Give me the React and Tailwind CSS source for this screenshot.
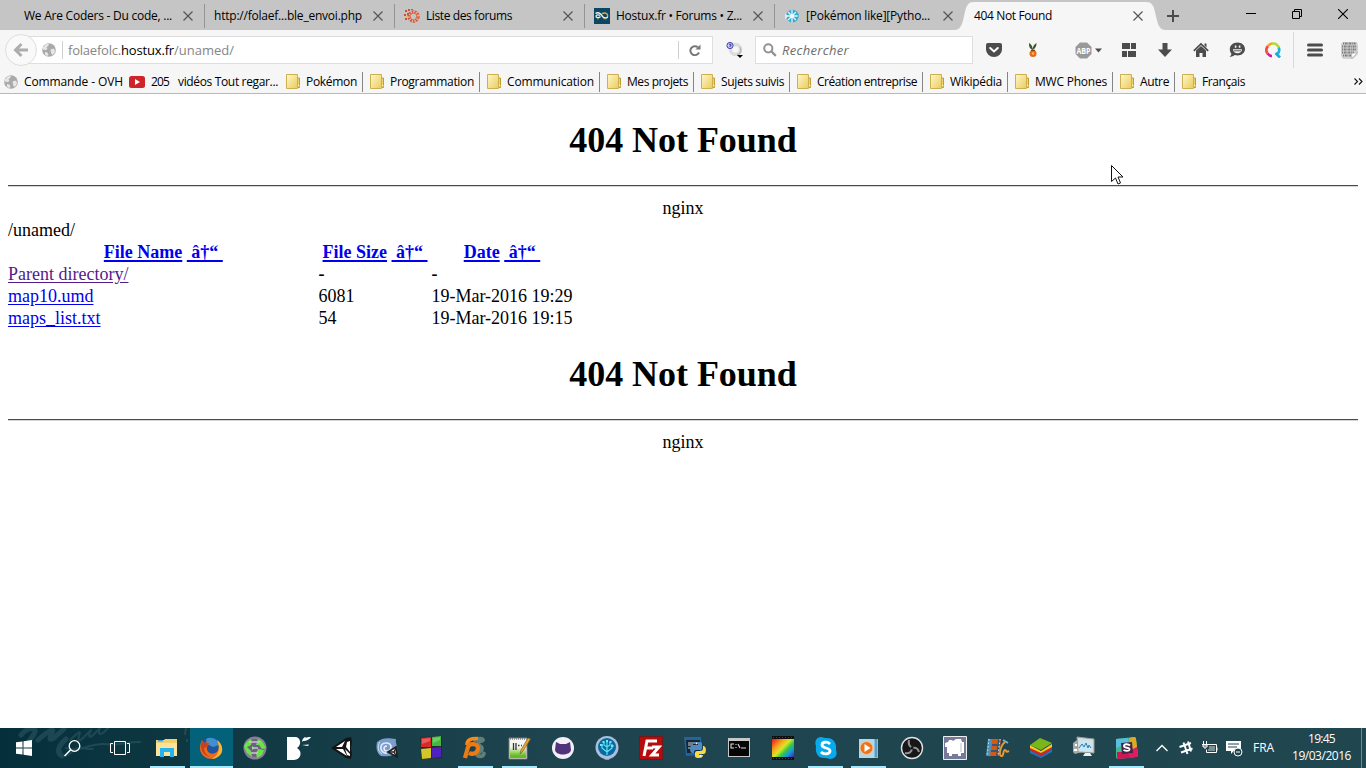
import React, { useLayoutEffect, useRef, useState } from "react";

/* Text spread over a given width by adjusting its letter spacing. */
function Fit({ w, className = "", children }) {
  const ref = useRef(null);
  const [spacing, setSpacing] = useState(0);
  useLayoutEffect(() => {
    const el = ref.current;
    setSpacing((w - el.getBoundingClientRect().width) / el.textContent.length);
  }, [w]);
  return (
    <span ref={ref} style={{ letterSpacing: spacing + "px" }} className={"inline-block shrink-0 whitespace-pre " + className}>
      {children}
    </span>
  );
}

function Svg({ s = 16, vb, className = "", children }) {
  return (
    <svg width={s} height={s} viewBox={vb || `0 0 ${s} ${s}`} fill="none" className={"block shrink-0 " + className}>
      {children}
    </svg>
  );
}

const Close = () => (
  <Svg s={10}><path d="M.5.5l9 9M9.5.5l-9 9" stroke="#555" strokeWidth="1.2" /></Svg>
);

const Globe = ({ s = 14 }) => (
  <Svg s={s} vb="0 0 14 14">
    <circle cx="7" cy="7" r="6.8" fill="#a9a9a9" />
    <path d="M1 4.5L3.8 1.2 7 .7 6.2 3 4.5 4.3 5.4 6 3.8 7.2 2 6.5 1 7zM8.500 6.500l3-1 1.500 1.700-.6 3.200L10 12l-1-2.3zM3 9l2.4.6L6.600 12 5 13 3 11.600z" fill="#e6e6e6" />
  </Svg>
);

const Folder = () => (
  <Svg s={15}>
    <path d="M11 4h2.5v9.5H11z" fill="#ecd36c" stroke="#bd9f34" strokeWidth="1" />
    <path d="M.5.5h11v14H.5z" fill="url(#folderFill)" stroke="#cdb052" />
    <path d="M12 11.5h1.5" stroke="#fff2b3" />
    <defs>
      <linearGradient id="folderFill" x1="0" y1="0" x2="1" y2="1">
        <stop offset="0" stopColor="#fff6c5" /><stop offset="1" stopColor="#e9cd60" />
      </linearGradient>
    </defs>
  </Svg>
);

const ForumIcon = () => (
  <Svg s={16}>
    <circle cx="9.500" cy="8.500" r="4.500" stroke="#d8563a" strokeWidth="3.400" strokeDasharray="2 .7" />
    <circle cx="9.500" cy="8.500" r="4.600" stroke="#f7bd98" strokeWidth="1.300" strokeDasharray="1 1.600" />
    <path d="M1 2h2v2H1zM4 1h2v2H4zM0 6h2v2H0zM3 5h2v2H3zM1 10h2v2H1zM7 1h2v1H7z" fill="#c9503a" />
    <path d="M3 3h1v1H3zM2 8h2v1H2zM5 3h2v1H5z" fill="#f0b35e" />
  </Svg>
);
const HostuxIcon = () => (
  <Svg s={16}>
    <path d="M0 0h16v16H0z" fill="#0b4763" />
    <path d="M1.500 5.500C3 4.300 5.500 4.500 7 6.500L9 9c1.500 1.500 4.500 1.300 4.700-.8" stroke="#f1f1ed" strokeWidth="1.400" />
    <path d="M6.500 8.500C5 10.300 2 10 2 8.300c0-1.500 2.500-2 4-.8" stroke="#f1f1ed" strokeWidth="1.300" />
    <path d="M8 6c1.500-1.700 5.500-1.500 5.800 2" stroke="#e3a844" strokeWidth="1.400" />
    <path d="M3 10.800h2M9.500 10.800h3" stroke="#e3a844" strokeWidth=".8" />
  </Svg>
);
const ZesteIcon = () => (
  <Svg s={14} vb="0 0 16 16">
    <circle cx="8.500" cy="8" r="7.200" fill="#35a9d1" />
    <path d="M8 1v14M1.500 8h13M3.500 3.500l9 9M12.500 3.500l-9 9" stroke="#dff5fb" strokeWidth="1.500" />
    <circle cx="8" cy="8" r="2.200" fill="#e8fbff" />
    <path d="M0 5l4 3-4 4z" fill="#d8eef4" />
  </Svg>
);

function Tab({ icon, title, w, className = "w-[190px]" }) {
  return (
    <div className={"flex h-[30px] shrink-0 items-center justify-between border-r border-[#9b9b9b] pl-[9px] pr-[11px] pt-[2px] [border-image:linear-gradient(to_bottom,transparent_5px,#949494_5px,#949494_27px,transparent_27px)_1] " + className}>
      <div className="flex items-center gap-[6px]">
        {icon && <span className="flex w-4 justify-center">{icon}</span>}
        <Fit w={w}>{title}</Fit>
      </div>
      <Close />
    </div>
  );
}

function TabBar() {
  return (
    <div className="flex h-[30px] bg-[#c5c5c5]">
      <Tab title="We Are Coders - Du code, ..." w={148} className="w-[205px] !pl-6" />
      <Tab title="http://folaef...ble_envoi.php" w={148} />
      <Tab icon={<ForumIcon />} title="Liste des forums" w={86} />
      <Tab icon={<HostuxIcon />} title="Hostux.fr • Forums • Z..." w={126} />
      <div className="flex w-[179px] shrink-0 items-center justify-between pl-[9px] pr-px pt-[2px]">
        <div className="flex items-center gap-[6px]">
          <span className="flex w-4 justify-center"><ZesteIcon /></span>
          <Fit w={124}>[Pokémon like][Pytho...</Fit>
        </div>
        <Close />
      </div>
      <svg width="20" height="30" className="block shrink-0"><path d="M0 30C8 30 8.500 22 10.500 14 12.500 5 14 2 20 2v28z" fill="#f6f6f6" /></svg>
      <div className="mt-[2px] flex h-7 w-[172px] shrink-0 items-center justify-between bg-[#f6f6f6] pr-[3px]">
        <Fit w={78}>404 Not Found</Fit>
        <Close />
      </div>
      <svg width="20" height="30" className="block shrink-0"><path d="M20 30C12 30 11.500 22 9.500 14 7.500 5 6 2 0 2v28z" fill="#f6f6f6" /></svg>
      <Svg s={12} className="ml-px mt-[10px]"><path d="M6 0v12M0 6h12" stroke="#4c4c4c" strokeWidth="2" /></Svg>
      <div className="ml-[67px] mt-[9px] flex gap-9">
        <Svg s={10}><path d="M0 4.500h10" stroke="#000" /></Svg>
        <Svg s={10}><path d="M.5 2.500h7v7h-7zM2.500 2V.5h7v7H8" stroke="#000" /></Svg>
        <Svg s={10}><path d="M0 0l10 10M10 0L0 10" stroke="#000" strokeWidth="1.100" /></Svg>
      </div>
    </div>
  );
}

const DARK = "#4c4c4c";

function Toolbar() {
  return (
    <div className="flex h-10 items-center">
      <div className="z-10 ml-[5px] flex size-8 shrink-0 items-center justify-center rounded-full border border-[#dedede] bg-[#f9f9f9]">
        <Svg s={16}><path d="M8.500 2L2.500 8l6 6M3 8h12" stroke="#adadad" strokeWidth="3" /></Svg>
      </div>
      <div className="-ml-[9px] flex h-7 w-[685px] shrink-0 items-center border border-[#dedede] bg-white pl-[13px]">
        <Globe />
        <div className="ml-[6px] mr-[5px] h-[18px] w-px bg-[#cfcfcf]" />
        <div className="flex text-[13px] text-[#858585]">
          <Fit w={53}>folaefolc.</Fit><Fit w={53} className="text-black">hostux.fr</Fit><Fit w={60}>/unamed/</Fit>
        </div>
        <div className="ml-auto h-[18px] w-px bg-[#cfcfcf]" />
        <Svg s={12} className="ml-[10px] mr-[11px]">
          <path d="M10 8.500a4.500 4.500 0 1 1-1.200-5.300" stroke="#777" strokeWidth="2" />
          <path d="M11.500.5v5H6.500z" fill="#777" />
        </Svg>
      </div>
      <Svg s={18} className="ml-[13px]">
        <circle cx="9.500" cy="8.500" r="5" stroke="#dcdcdc" strokeWidth="3.500" />
        <path d="M14 6c2 3 1 7-3 8" stroke="#b6b6b6" strokeWidth="1.300" />
        <circle cx="4" cy="4.500" r="3.100" fill="#c9c9ff" stroke="#4144a5" />
        <path d="M3 3.300h2v1.500H4v1.200" stroke="#3133a0" strokeWidth=".9" />
        <path d="M11 14h6l-3 3z" fill="#000" />
      </Svg>
      <div className="ml-[11px] flex h-7 w-[218px] shrink-0 items-center border border-[#dedede] bg-white pl-[7px] text-[13px] italic text-[#6d6d6d]">
        <Svg s={14} className="mr-[5px]">
          <circle cx="5.300" cy="5.300" r="4.100" stroke="#929292" strokeWidth="2" /><path d="M8.500 8.500l4.300 4.300" stroke="#929292" strokeWidth="2.400" />
        </Svg>
        <Fit w={67}>Rechercher</Fit>
      </div>
      <Svg s={16} className="ml-[13px]">
        <path d="M2 1h12a2 2 0 0 1 2 2v4.500a8 7.500 0 0 1-16 0V3a2 2 0 0 1 2-2z" fill={DARK} />
        <path d="M4.200 6L8 9.500 11.800 6" stroke="#fff" strokeWidth="2" strokeLinecap="round" />
      </Svg>
      <Svg s={16} className="ml-[23px]">
        <path d="M7.500 8C4 6 4 4 4 1c2 1 3.500 3 3.700 6 .2-3 1.800-5 3.800-6 0 3-1 5.500-4 7z" fill="#385b26" />
        <circle cx="8" cy="11.500" r="3.500" fill="#e66b14" /><circle cx="8" cy="11.500" r="1.200" fill="#ffb45f" />
        <path d="M6 8.300h4" stroke="#742d0c" />
      </Svg>
      <Svg s={17} className="ml-[34px]">
        <path d="M5 .5h7L16.500 5v7L12 16.500H5L.5 12V5z" fill="#999" />
        <text x="8.500" y="11.500" textAnchor="middle" textLength="14" lengthAdjust="spacingAndGlyphs" className="fill-white font-['Open_Sans',sans-serif] text-[8.5px] font-bold">ABP</text>
      </Svg>
      <Svg s={7} className="ml-[3px]"><path d="M0 1.500h7L3.500 5.500z" fill={DARK} /></Svg>
      <Svg s={14} className="ml-5"><path d="M0 0h8v6H0zM9 0h5v6H9zM0 8h5v6H0zM6 8h8v6H6z" fill={DARK} /></Svg>
      <Svg s={14} className="ml-[22px]"><path d="M4.500 0h5v6.500H14L7 14 0 6.500h4.500z" fill={DARK} /></Svg>
      <Svg s={16} className="ml-[21px]"><path d="M3 8.500L8 4l5 4.500V15H9.500v-4h-3v4H3zM11.500 1.500h2v4l-2-2z" fill={DARK} /><path d="M.8 8.800L8 2l7.200 6.800" stroke={DARK} strokeWidth="1.700" /></Svg>
      <Svg s={16} className="ml-5">
        <path d="M8.500.5c4.300 0 7.500 2.900 7.500 6.500s-3.200 6.500-7.500 6.500c-1 0-1.900-.1-2.700-.4C4.500 14.200 2.800 15 .3 15c1.200-.8 2-1.900 2.100-3.300C1.300 10.500.8 8.900.8 7 .8 3.400 4.200.5 8.500.5z" fill={DARK} />
        <path d="M4 7.300h9c0 5.200-9 5.200-9 0z" fill="#f6f6f6" /><path d="M5 8.800h7" stroke={DARK} strokeWidth=".9" /><path d="M5.800 3.500h1.600v2.200H5.800zM9.800 3.500h1.600v2.200H9.800z" fill="#f6f6f6" />
      </Svg>
      <Svg s={16} className="ml-5">
        <path d="M2.500 11.500A6.200 6.200 0 0 1 3 4" stroke="#f2503c" strokeWidth="2.700" />
        <path d="M3 4a6.200 6.200 0 0 1 4-2.500" stroke="#fba120" strokeWidth="2.700" />
        <path d="M7 1.600c3-.5 5.500 1 6.800 3.800" stroke="#b8d82c" strokeWidth="2.700" />
        <path d="M13.700 5.400c1 2.500.4 5.200-1.700 7" stroke="#1fb4da" strokeWidth="2.700" />
        <path d="M2.500 11.500C3.700 13 5.200 14 7 14" stroke="#d9189a" strokeWidth="2.700" />
        <path d="M10.500 11l4.500 4.500" stroke="#21a7e0" strokeWidth="2.700" />
      </Svg>
      <div className="ml-3 h-9 w-px shrink-0 bg-[#dadada]" />
      <Svg s={16} className="ml-[13px]"><path d="M1.500 3h13M1.500 8h13M1.500 13h13" stroke={DARK} strokeWidth="3" strokeLinecap="round" /></Svg>
      <Svg s={17} className="ml-[18px]">
        <path d="M2 0h14l1 3v9l-5 5H2l-2-3V2z" fill="#d2d2d2" />
        <path d="M2 1.500h13M1 4.500h15M1 7.500h15M1 10.500h12M2 13.500h8" stroke="#7b7b7b" strokeWidth="2.200" strokeDasharray="1 .8 2 .6" />
        <path d="M16.500 10.500L11 16.500l-.500-5z" fill="#fff" stroke="#aaa" strokeWidth=".7" />
      </Svg>
    </div>
  );
}

const FOLDERS = [
  ["Pokémon", 51], ["Programmation", 84], ["Communication", 87], ["Mes projets", 61], ["Sujets suivis", 63],
  ["Création entreprise", 100], ["Wikipédia", 52], ["MWC Phones", 72], ["Autre", 29], ["Français", 43],
];
function Bookmarks() {
  return (
    <div className="flex h-6 items-center border-b border-[#b9b9b9] pl-1">
      <Globe />
      <Fit w={99} className="ml-[6px]">Commande - OVH</Fit>
      <Svg s={16} className="ml-[6px]">
        <rect x="0" y="2" width="16" height="12" rx="2.500" fill="#cf2429" /><path d="M6 5l5 3-5 3z" fill="#fff" />
      </Svg>
      <Fit w={18} className="ml-[6px]">205</Fit>
      <Fit w={100} className="ml-[9px] mr-[1px]">vidéos Tout regar...</Fit>
      {FOLDERS.map(([name, w], i) => (
        <div key={name} className={"flex h-5 shrink-0 items-center pl-[7px] pr-[5px] " + (i < 9 ? "border-r border-[#858585]" : "")}>
          <Folder />
          <Fit w={w} className="ml-[5px]">{name}</Fit>
        </div>
      ))}
      <Svg s={9} className="ml-auto mr-[3px]"><path d="M.5 1.500l3 3-3 3M5 1.500l3 3-3 3" stroke="#111" strokeWidth="1.100" /></Svg>
    </div>
  );
}

const NotFound = () => (
  <div className="text-center">
    <h1 className="mb-6 text-[36px] font-bold leading-[42px]"><Fit w={227.5}>404 Not Found</Fit></h1>
    <div className="mb-[10px] h-[2px] border-b border-t border-b-[#d4d4d4] border-t-[#4b4b4b]" />
    <div>nginx</div>
  </div>
);

const Sortable = ({ children }) => (
  <div className="flex justify-center gap-[4.5px] font-bold text-[#0000ee]">
    <span className="underline decoration-2 underline-offset-2">{children}</span>
    <span className="whitespace-pre underline decoration-2 underline-offset-2">{"\u00a0â†“\u00a0"}</span>
  </div>
);
const LINK = "text-[#0000ee] underline underline-offset-2";

function Listing() {
  return (
    <div className="grid grid-cols-[310.6px_112.9px_141px] whitespace-nowrap">
      <Sortable>File Name</Sortable><Sortable>File Size</Sortable><Sortable>Date</Sortable>
      <div><span className="text-[#551a8b] underline underline-offset-2">Parent directory/</span></div><b>-</b><b>-</b>
      <div><span className={LINK}>map10.umd</span></div><div>6081</div><div>19-Mar-2016 19:29</div>
      <div><span className={LINK}>maps_list.txt</span></div><div>54</div><div>19-Mar-2016 19:15</div>
    </div>
  );
}

/* Taskbar drawings, on a 24 unit canvas. */
const APPS = [
  { run: true, art: <>
    <path d="M1 4h8l1-1h12v17H1z" fill="#f2cf6b" /><path d="M1 7h21v13H1z" fill="#fbe39b" /><path d="M3 4h5v1.500H3z" fill="#38a3d9" />
    <path d="M5 21v-9h14v9h-4v-5H9v5z" fill="#25b3ee" /></> },
  { run: true, active: true, art: <>
    <circle cx="12" cy="12" r="10.500" fill="#23539c" /><path d="M7 3c5-3 12 0 13 6l-6 2-6-3z" fill="#3f8fd3" />
    <path d="M18 4c6 4 7 12 2 16-7 6-18 2-19-7 0-4 1-7 2-9l2 3c2-1 4-1 6 0-2 1-2 3-3 4-1 5 4 8 8 6 5-2 5-8 2-13z" fill="#ec6a1c" />
    <path d="M18 4c6 4 7 12 2 16-2 2-5 3-8 3 7-3 10-10 6-19z" fill="#f8b52e" /><path d="M3 4l2 3 5 0-2 4-3 1c0 4 2 7 6 9-7-1-11-8-8-17z" fill="#cc3f1d" /></> },
  { art: <>
    <circle cx="12" cy="12" r="11.500" fill="#897d98" /><circle cx="12" cy="12" r="9" fill="#6f5f80" />
    <path d="M2 8l5-5 2 2-1 4-4 2 4 4 1 6-5-4-3-6zM15 3l4 2 4 7-4 1-3-4-3 0zM15 13l6 1-2 5-5 3-1-5zM9 10l3 2-3 2z" fill="#6ae34b" /><path d="M8 17h7M6 6h11M9 12h6" stroke="#ccc2d3" strokeWidth="1.500" /></> },
  { art: <>
    <path d="M0 1h8c6 0 7 8 2 11 6 3 4 12-3 12H0z" fill="#fff" /><path d="M15 6c0-3 2-5 4-5-1 2-2 3-4 5zM16 5c2-4 5-4 8-4-1 2-4 4-8 4zM15 9l7-.5-1 1.500z" fill="#fff" /></> },
  { art: <>
    <path d="M0 12L15 2l5-1 1 5-1 6 1 6-1 5-5-1z" fill="#141414" /><path d="M5 11l9-6-3 6zM16 6l3-1v11l-4-5zM5 13h7l4 7z" fill="#fff" /><path d="M14 13l5 5v2l-3-1z" fill="#fff" /></> },
  { art: <>
    <path d="M2 6c6-5 11-4 19-3-1 4 2 7 1 12-4 5-8 6-16 5C1 17 1 10 2 6z" fill="#7a9dcc" /><path d="M12 17c-7 1-9-10-1-10 7 0 6 8 1 8-4 0-4-5 0-5" stroke="#e1edfa" strokeWidth="1.700" /><path d="M7 18c-4-2-5-8-2-12" stroke="#d0e2f5" />
    <path d="M13 16l8-5 1 10z" fill="#fff" stroke="#202020" strokeWidth="1.800" /><path d="M14 16h5l2-4M19 16l2 4" stroke="#202020" strokeWidth="1.400" /></> },
  { art: <>
    <path d="M1 1l22-1v22L2 23z" fill="#292b25" /><path d="M2 2l10-1v10H2z" fill="#d8282a" /><path d="M13 1l9-1v10h-9z" fill="#42b83e" /><path d="M2 13l10-1v10l-9 1z" fill="#d3c629" /><path d="M13 12l9-1v10l-9 1z" fill="#5120c0" /><path d="M3 3l8-1v3L3 8zM14 2l7-1v3l-7 3z" fill="#fff" opacity=".25" /></> },
  { run: true, art: <>
    <path d="M12 4.500c3-3 8-2 8-.5s-4 1-5 3M21 17.500c-1 4-7 3.500-7 1 0-2 5-2.500 5-6 0-2-2-3-4-3" stroke="#607f78" strokeWidth="3.800" strokeLinecap="round" />
    <path d="M15 2.500C8 2 4 4 4 9" stroke="#f58a1c" strokeWidth="3.600" />
    <path d="M2 22l3-11c1-4 10-4 10 1 0 5-5 7-9 5" stroke="#ed7b14" strokeWidth="4.200" /></> },
  { run: true, art: <>
    <path d="M2 2h18v21H2z" fill="#f6f6f3" stroke="#777" /><path d="M3 11h16v11H3z" fill="url(#leaf)" /><path d="M3 3h16" stroke="#555" strokeDasharray="1 1" /><path d="M6.500 7v7M9 7v7M11 9.500h1.500M14 9.500h1" stroke="#343831" strokeWidth="1.300" /><path d="M13 18l1-4 7-12 2.500 1-7.500 12z" fill="#e9a82d" stroke="#835d31" strokeWidth=".7" />
    <defs><linearGradient id="leaf" x1="0" y1="0" x2="0" y2="1"><stop stopColor="#f4f8e8" /><stop offset=".8" stopColor="#62bd1c" /></linearGradient></defs></> },
  { art: <>
    <circle cx="12" cy="12" r="11" fill="#f2f0f6" /><path d="M5 6l4 2h6l4-2 1 8c-1 6-15 6-16 0z" fill="#50327d" /></> },
  { art: <>
    <path d="M8 20h8l-2 4h-4z" fill="#7c98b5" /><circle cx="12" cy="11.500" r="11.500" fill="#a9bfdd" /><circle cx="12" cy="11" r="9" fill="#0a6aa0" />
    <path d="M12 19V5M12 16l-5-4V8M12 16l5-4V8M12 11L9 9V6M12 11l3-2V6" stroke="#5de1ed" strokeWidth="1.200" />
    <path d="M11 4h2v2h-2zM7.500 5h2v2h-2zM14.500 5h2v2h-2zM5 8h2.500v2H5zM16 9h2.500v2H16z" fill="#68edea" /></> },
  { art: <>
    <path d="M.5.5h23v23H.5z" fill="#b90b0c" stroke="#79100d" strokeDasharray="2 1" /><path d="M5 20L8 5h10M7 12h7M13 11h7l-7 8h7" stroke="#fff" strokeWidth="3" /></> },
  { art: <>
    <path d="M1 1h17l1 18-16 1z" fill="#2463a1" /><path d="M3 4h14v13H4z" fill="#172530" /><path d="M5 7h7M5 9h5M5 12h6" stroke="#cad7df" />
    <path d="M12 6h5q2 0 2 2v4q0 2-2 2h-4q-2 0-2 3H9q-2-1-2-4t2-4h6V8h-4q0-2 1-2z" fill="#4f8bc2" />
    <path d="M20 10h1q2 1 2 4t-2 4h-5v1h4q0 3-4 3t-4-2v-3q0-2 2-2h4q2 0 2-3z" fill="#ffd83d" /><path d="M13 7.500h1M17 20h1" stroke="#fff" strokeWidth="1.300" /></> },
  { art: <>
    <path d="M1 2h22v19H1z" fill="#c8c8c8" /><path d="M2 5h20v15H2z" fill="#050505" /><path d="M7 8H4v4h3M9 8v1M9 11v1M11 8l2 4M14 12h5" stroke="#ddd" strokeWidth="1.100" /></> },
  { art: <>
    <path d="M1 0h22v24H1z" fill="#101010" /><path d="M1 3h22v18H1z" fill="url(#spectrum)" /><path d="M2 1.500h21M2 22.500h21" stroke="#445" strokeDasharray="1 2" />
    <defs><linearGradient id="spectrum" x1="0" y1=".1" x2="1" y2=".9"><stop stopColor="#eb271b" /><stop offset=".3" stopColor="#f7a81f" /><stop offset=".48" stopColor="#d7e823" /><stop offset=".65" stopColor="#36c648" /><stop offset=".82" stopColor="#119bdb" /><stop offset="1" stopColor="#4930c6" /></linearGradient></defs></> },
  { run: true, art: <>
    <path d="M7 1c2 0 3 1 4 1 9-1 12 6 11 12 2 5-1 9-6 9-1 0-3-1-4-1C4 23 1 17 2 10 0 5 3 1 7 1z" fill="#08aaec" />
    <path d="M16 8C13 5 8 6 8 9c0 4 8 2 8 6 0 3-6 4-9 1" stroke="#fff" strokeWidth="2.800" /></> },
  { run: true, art: <>
    <path d="M4 4l17-1v19H4z" fill="#83c0e0" /><path d="M2 3h15v19H2z" fill="#afd8ed" /><path d="M19 3v18" stroke="#35779d" /><circle cx="9.500" cy="12" r="6.500" fill="#ed741b" stroke="#f7c89d" /><path d="M7.500 8l6 4-6 4z" fill="#fff" /></> },
  { art: <>
    <circle cx="12" cy="12" r="10.500" fill="#171719" stroke="#e0e0e0" strokeWidth="1.400" /><path d="M9 4c-1 4 0 6 3 8M12 12c3-1 6 0 7 4M12 12c0 4-3 6-7 5" stroke="#929296" strokeWidth="2" /><circle cx="12" cy="12" r="1.500" fill="#151517" /></> },
  { art: <>
    <path d="M.5.5h23v23H.5z" fill="#77799a" stroke="#eee" /><path d="M5 6l1-2h3l1 1 3-2h5l1 3h2v11h-3v3h-3v-2H9v2H6v-3H4v-6H2V7z" fill="#fff" /><path d="M18 7v9" stroke="#bbb" /></> },
  { art: <>
    <path d="M3 3h12l-2 17H1z" fill="#d95712" /><path d="M4 3L2 20" stroke="#4b93c0" strokeWidth="4" /><path d="M13 3l-2 17M6 9h6M5 15h6" stroke="#285d7e" strokeWidth="2" /><path d="M3 3L1 20M14 3l-2 17" stroke="#d5e5ea" strokeDasharray="1.500 2" />
    <path d="M19 6c-5 4-7 15-3 14 2-1 1-6 3-6 2 0 0 3 4 1" stroke="#e19a38" strokeWidth="2" /><path d="M17 4l5 3" stroke="#7cb0d0" strokeWidth="2" /></> },
  { art: <>
    <path d="M1 14l11 6 11-7v3l-11 6L1 17z" fill="#2672b4" /><path d="M1 11l11 6 11-7v3l-11 7-11-6z" fill="#d42229" /><path d="M1 9l11 6 11-7v3l-11 6-11-5z" fill="#f4cd15" /><path d="M1 9l10-7 12 5-11 7z" fill="#79b61b" /></> },
  { art: <>
    <path d="M1 7l4-3 2 2 3-1v11l-7 2-2-2z" fill="#a8aaa7" /><path d="M2 14h8M3 9h4" stroke="#fff" strokeWidth="2" /><path d="M5 1l17 2v14L6 16z" fill="#d8ddd9" stroke="#929b9a" /><path d="M7 4l13 1v10H7z" fill="#c8e7f5" /><path d="M7 12l3-4 2 3 2-4 2 5 1-3 2 3" stroke="#2b7eb4" /><path d="M13 17h5l2 3h-9z" fill="#eee" /></> },
  { run: true, art: <>
    <path d="M1 3l18-2q2 0 2 2l2 16q0 2-2 2L3 23q-2 0-2-2z" fill="#3eb890" /><path d="M1 3l12-1 1 5L1 12z" fill="#5bbde0" /><path d="M14 2l5-1q2 0 2 2l1 8-6 3z" fill="#e0a924" /><path d="M2 16l11 0 3 6-13 1q-1 0-1-2z" fill="#cf1754" /><path d="M14 15l8-4 1 8q0 2-2 2l-6 1z" fill="#e71761" /><path d="M6 7l11-1 1 11-11 1z" fill="#472448" /><path d="M15 9.500c-2-2-6-1.500-6 .5 0 2.500 6 1 5.500 3.500-.5 2-4 1.500-6 .5" stroke="#fff" strokeWidth="1.900" /></> },
];

function Taskbar() {
  return (
    <div className="relative flex h-10 shrink-0 overflow-hidden bg-gradient-to-r from-[#05303b] via-[#1e454f] via-40% to-[#20474f] text-white">
      <svg width="200" height="40" fill="none" className="absolute left-0 top-0">
        <g stroke="#86afb8" opacity=".17" strokeLinecap="round" strokeLinejoin="round">
          <path d="M21 7c6-8 18-9 13-1-4 6-6 9-10 15M38 12c10-9 17-13 14-7-3 5-3 9 3 4l9-8M62 28c-6-3-4-10 4-17" strokeWidth="5" />
          <path d="M70 12c7-6 12-12 9-4-2 5 1 6 6 0l6-6c-4 8-1 9 5 2l4-4c-3 8 1 8 8 0M66 20c12 5 25-5 38-4 14 2 20-2 36-2M61 23c-3 8 6 6 12 0s12-1 20-2M187 12v1M186 0l-1 6" strokeWidth="2" />
        </g>
      </svg>
      <div className="relative flex w-[145px] shrink-0 items-center pl-4">
        <Svg s={16}><path d="M0 2.300l6.500-.9v6.100H0zM7.500 1.200L16 0v7.500H7.500zM0 8.500h6.500v6.100L0 13.700zM7.500 8.500H16V16l-8.500-1.200z" fill="#fff" /></Svg>
        <Svg s={17} className="ml-8"><circle cx="10.500" cy="6" r="5.300" stroke="#fff" strokeWidth="1.300" /><path d="M6.700 9.800L.5 16" stroke="#fff" strokeWidth="1.500" /></Svg>
        <svg width="20" height="14" fill="none" className="ml-[29px] block shrink-0"><path d="M4.500.5h11v13h-11zM3 2.500H.5v9H3M17 2.500h2.500v9H17" stroke="#fff" /></svg>
      </div>
      {APPS.map((app, i) => (
        <div key={i} className={"relative flex shrink-0 flex-col items-center justify-between " + (i < 14 ? "w-11 " : "w-[43px] ")}>
          <div className={"flex h-[38px] items-center justify-center pt-[2px] " + (app.active ? "w-[43px] bg-[#04617a]" : "w-[35px]")}>
            <Svg s={24}>{app.art}</Svg>
          </div>
          {app.run && <div className={"h-[2px] bg-[#a5e8fb] " + (app.active ? "w-[43px]" : "w-[35px]")} />}
        </div>
      ))}
      <div className="relative flex grow items-center">
        <Svg s={12} className="ml-[8px]"><path d="M.5 9L6 3.500 11.500 9" stroke="#fff" strokeWidth="1.300" /></Svg>
        <Svg s={14} className="ml-[11px]"><path d="M4.500 1.500l4 11.500M9 .5l3 10M.5 6L12 2M2 11.500l11.500-4" stroke="#fff" strokeWidth="2" /></Svg>
        <Svg s={16} className="ml-[9px]"><path d="M6 4.500h8.500v8h-10v-3M15 7.500v3" stroke="#fff" /><path d="M7 6h6v5H6V9h1z" fill="#fff" opacity=".4" /><path d="M1.500 1v3M4.500 1v3M0 4.500h6M1 5h4v2H1zM3 7v2" stroke="#fff" /></Svg>
        <Svg s={17} className="ml-[8px]"><path d="M0 1h15v9H8.500L5 14v-3H0z" fill="#fff" /><path d="M2 4h11M2 7h9" stroke="#234750" /><circle cx="12" cy="12" r="4" fill="#20474f" stroke="#fff" /><path d="M10 12h4" stroke="#fff" /></Svg>
        <Fit w={21} className="ml-[10px]">FRA</Fit>
        <div className="ml-[18px] flex flex-col items-center pb-[3px] leading-[17px]">
          <Fit w={27}>19:45</Fit><Fit w={59}>19/03/2016</Fit>
        </div>
        <div className="ml-auto mr-1 h-10 w-px bg-[#6c888e]" />
      </div>
    </div>
  );
}

export default function App() {
  return (
    <div className="flex h-[768px] w-[1366px] flex-col overflow-hidden bg-white font-['Open_Sans','Noto_Sans',sans-serif] text-[12px] leading-4 text-black">
      <header className="shrink-0 bg-[#f6f6f6]">
        <TabBar />
        <Toolbar />
        <Bookmarks />
      </header>
      <main className="grow px-2 pt-[25px] font-['Liberation_Serif',serif] text-[18px] leading-[22px]">
        <NotFound />
        <div>/unamed/</div>
        <Listing />
        <div className="pt-6"><NotFound /></div>
      </main>
      <Taskbar />
      <svg width="13" height="20" className="absolute left-[1111px] top-[165px]">
        <path d="M.5.5v16l4-3.500 2.500 6 2.500-1L7 12h5z" fill="#fff" stroke="#111" />
      </svg>
    </div>
  );
}
